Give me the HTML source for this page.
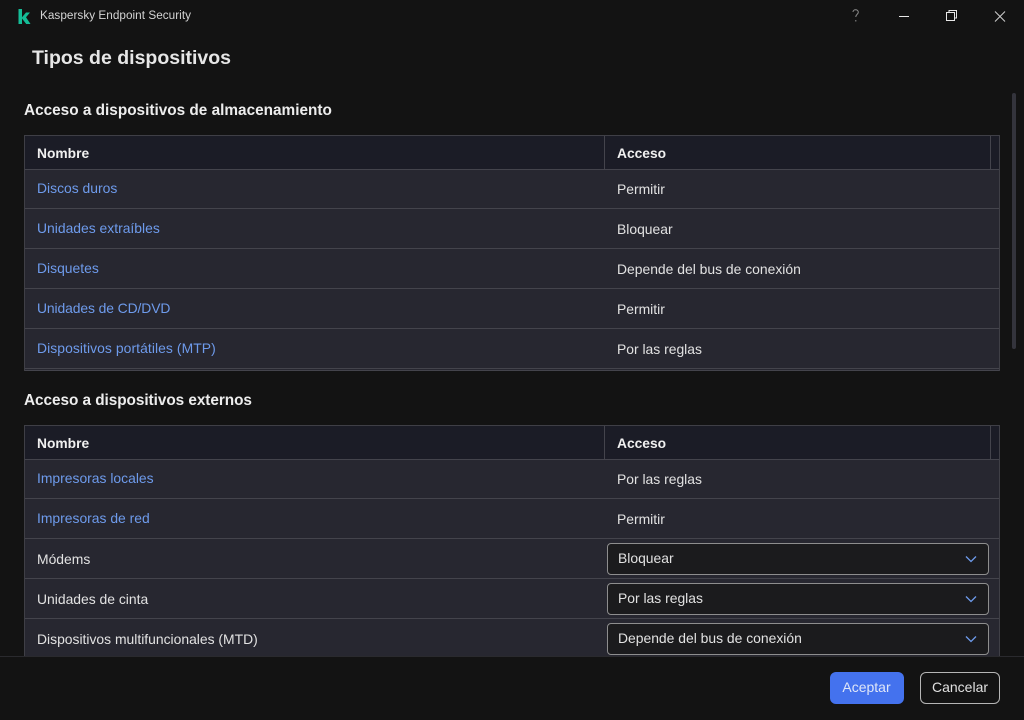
<!DOCTYPE html>
<html lang="es">
<head>
<meta charset="utf-8">
<title>Kaspersky Endpoint Security</title>
<style>
html,body{margin:0;padding:0;width:1024px;height:720px;overflow:hidden;background:#131313;}
body{position:relative;font-family:"Liberation Sans",sans-serif;font-size:14px;color:#e6e6e6;}
.a{position:absolute;white-space:nowrap;line-height:18px;}
.h{font-weight:bold;color:#ededed;font-size:15.350px;}
.link{color:#6e9bec;font-size:13.900px;}
.t{color:#e2e2e2;font-size:13.900px;}
.th{font-weight:bold;color:#f0f0f0;font-size:13.800px;}
.box{position:absolute;left:24px;width:974px;border:1px solid #3f3f46;border-bottom:0;background:#272730;box-sizing:content-box;}
.head{position:absolute;left:0;top:0;width:974px;height:33px;background:#1b1c26;border-bottom:1px solid #44444c;}
.line{position:absolute;left:0;width:974px;height:1px;background:#44444c;}
.v{position:absolute;top:0;width:1px;height:34px;background:#44444c;}
.sel{position:absolute;left:607px;width:380px;height:30px;border:1px solid #8e8e8e;border-radius:4px;background:#1b1b1d;}
.chev{position:absolute;left:965px;width:12px;height:8px;}
.btn{position:absolute;top:672px;height:32px;border-radius:6px;box-sizing:border-box;text-align:center;line-height:31px;font-size:14px;}
</style>
</head>
<body>
<svg style="position:absolute;left:18px;top:9px" width="13" height="15" viewBox="0 0 13 15"><path d="M0.500 0h3.500v15h-3.500zM4 8.200L8 3.500h4L8 8.300 12.500 15H8.200L4 9.500z" fill="#14bd97"/></svg>
<div class="a" style="left:40px;top:7px;font-size:11.750px;letter-spacing:.03px;color:#d4d4d4">Kaspersky Endpoint Security</div>
<svg style="position:absolute;left:850px;top:8px" width="160" height="16" viewBox="0 0 160 16" fill="none">
<path d="M3 4C3 2.500 4.300 1.800 5.500 1.800 7 1.800 8.300 2.700 8.300 4.200 8.300 6.200 5.800 6.400 5.800 9" stroke="#8f8f8f" stroke-width="1"/>
<path d="M5.800 12v1.500" stroke="#8f8f8f" stroke-width="1"/>
<path d="M49 8.500h10" stroke="#e8e8e8" stroke-width="1"/>
<rect x="96.500" y="4.500" width="8" height="8" stroke="#e8e8e8"/>
<path d="M99 4.500V2.500h7.500V10h-2" stroke="#e8e8e8"/>
<path d="M145 3.500L155 13.500M155 3.500L145 13.500" stroke="#cfcfcf"/>
</svg>
<div class="a" style="left:32px;top:47px;font-size:19.500px;line-height:23px;font-weight:bold;color:#e6e6e6">Tipos de dispositivos</div>
<div style="position:absolute;left:1012px;top:93px;width:4px;height:256px;background:#34343c;border-radius:2px"></div>

<div class="a h" style="left:24px;top:102px">Acceso a dispositivos de almacenamiento</div>
<div class="box" style="top:135px;height:235px">
  <div class="head"></div><div class="v" style="left:579px"></div><div class="v" style="left:965px"></div>
  <div class="line" style="top:72px"></div><div class="line" style="top:112px"></div><div class="line" style="top:152px"></div><div class="line" style="top:192px"></div><div class="line" style="top:232px"></div><div class="line" style="top:234px"></div>
</div>
<div class="a th" style="left:37px;top:145px">Nombre</div>
<div class="a th" style="left:617px;top:145px">Acceso</div>
<div class="a link" style="left:37px;top:179px">Discos duros</div><div class="a t" style="left:617px;top:180px">Permitir</div>
<div class="a link" style="left:37px;top:219px">Unidades extraíbles</div><div class="a t" style="left:617px;top:220px">Bloquear</div>
<div class="a link" style="left:37px;top:259px">Disquetes</div><div class="a t" style="left:617px;top:260px">Depende del bus de conexión</div>
<div class="a link" style="left:37px;top:299px;letter-spacing:-.1px">Unidades de CD/DVD</div><div class="a t" style="left:617px;top:300px">Permitir</div>
<div class="a link" style="left:37px;top:339px;letter-spacing:.07px">Dispositivos portátiles (MTP)</div><div class="a t" style="left:617px;top:340px">Por las reglas</div>

<div class="a h" style="left:24px;top:392px;letter-spacing:-.05px">Acceso a dispositivos externos</div>
<div class="box" style="top:425px;height:235px">
  <div class="head"></div><div class="v" style="left:579px"></div><div class="v" style="left:965px"></div>
  <div class="line" style="top:72px"></div><div class="line" style="top:112px"></div><div class="line" style="top:152px"></div><div class="line" style="top:192px"></div>
</div>
<div class="a th" style="left:37px;top:435px">Nombre</div>
<div class="a th" style="left:617px;top:435px">Acceso</div>
<div class="a link" style="left:37px;top:469px">Impresoras locales</div><div class="a t" style="left:617px;top:470px">Por las reglas</div>
<div class="a link" style="left:37px;top:509px">Impresoras de red</div><div class="a t" style="left:617px;top:510px">Permitir</div>
<div class="a t" style="left:37px;top:550px">Módems</div>
<div class="a t" style="left:37px;top:590px">Unidades de cinta</div>
<div class="a t" style="left:37px;top:630px">Dispositivos multifuncionales (MTD)</div>
<div class="sel" style="top:543px"></div><div class="a t" style="left:618px;top:549px">Bloquear</div>
<div class="sel" style="top:583px"></div><div class="a t" style="left:618px;top:589px">Por las reglas</div>
<div class="sel" style="top:623px"></div><div class="a t" style="left:618px;top:629px">Depende del bus de conexión</div>
<svg class="chev" style="top:555px" viewBox="0 0 12 8" fill="none"><path d="M1 1.500L6 6.500l5-5" stroke="#6e9bec" stroke-width="1.300"/></svg>
<svg class="chev" style="top:595px" viewBox="0 0 12 8" fill="none"><path d="M1 1.500L6 6.500l5-5" stroke="#6e9bec" stroke-width="1.300"/></svg>
<svg class="chev" style="top:635px" viewBox="0 0 12 8" fill="none"><path d="M1 1.500L6 6.500l5-5" stroke="#6e9bec" stroke-width="1.300"/></svg>

<div style="position:absolute;left:0;top:656px;width:1024px;height:64px;background:#131313;border-top:1px solid #2a2a2e;box-sizing:border-box"></div>
<div class="btn" style="left:830px;width:74px;background:#4472ee;color:#dfe6f8;text-indent:-1px">Aceptar</div>
<div class="btn" style="left:920px;width:80px;border:1px solid #b5b5b5;color:#e0e0e0;line-height:29px">Cancelar</div>
</body>
</html>
